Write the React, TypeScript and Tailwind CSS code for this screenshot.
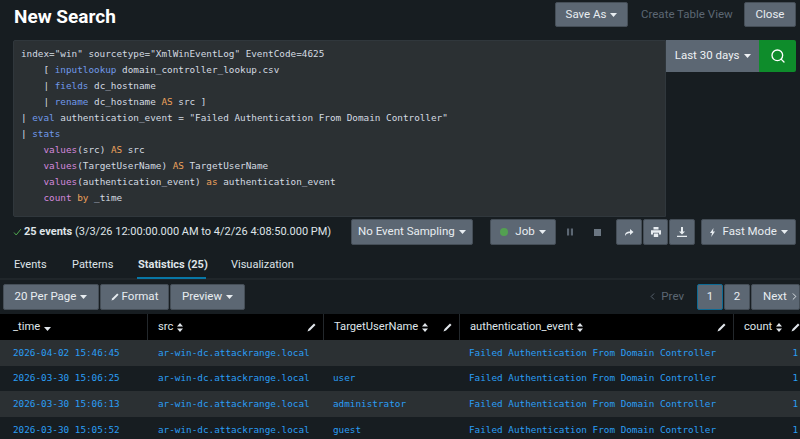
import { ChevronLeft, ChevronRight, Search } from 'lucide-react';

const rows = [
  { time: '2026-04-02 15:46:45', user: '', stripe: true },
  { time: '2026-03-30 15:06:25', user: 'user', stripe: false },
  { time: '2026-03-30 15:06:13', user: 'administrator', stripe: true },
  { time: '2026-03-30 15:05:52', user: 'guest', stripe: false },
];

function Caret() {
  return (
    <svg width="7" height="4" viewBox="0 0 7 4" className="ml-1 shrink-0">
      <path d="M0 0h7L3.5 4z" fill="currentColor" />
    </svg>
  );
}

function SortIcon() {
  return (
    <svg width="6" height="9" viewBox="0 0 6 9" className="ml-1 shrink-0 text-[#e1e6eb]">
      <path d="M3 0l3 3.4H0zM3 9L0 5.6h6z" fill="currentColor" />
    </svg>
  );
}

function Pencil() {
  return (
    <svg width="9" height="9" viewBox="0 0 9 9" className="shrink-0 text-[#e1e6eb]">
      <path d="M7 0.5l1.5 1.5L3 7.500 0.500 8.500 1.500 6z" fill="currentColor" />
    </svg>
  );
}

function Btn({ className, children }: { className: string; children: React.ReactNode }) {
  return (
    <div
      className={`flex items-center justify-center rounded-[2px] border border-[#454e57] bg-[#5c6773] text-[11.500px] text-[#e8edf1] ${className}`}
    >
      {children}
    </div>
  );
}

function Code({ c, children }: { c: string; children: React.ReactNode }) {
  return <span className={c}>{children}</span>;
}

function Th({ className, label, sort, pencil, down }: { className: string; label: string; sort?: boolean; pencil?: boolean; down?: boolean }) {
  return (
    <div className={`flex h-full shrink-0 items-center border-r border-[#23282c] pl-[10px] pr-[7px] ${className}`}>
      <span className="text-[11.200px] text-[#dfe4e8]">{label}</span>
      {sort && <SortIcon />}
      {down && (
        <span className="mt-[3px] text-[#e1e6eb]">
          <Caret />
        </span>
      )}
      {pencil && (
        <span className="ml-auto">
          <Pencil />
        </span>
      )}
    </div>
  );
}

export default function App() {
  const kw = 'text-[#7099ea]';
  const orange = 'text-[#eda25c]';
  const pink = 'text-[#d488dc]';

  return (
    <div className="flex h-[439px] w-[800px] flex-col overflow-hidden bg-[#171d21] font-['Roboto',sans-serif]">
      {/* title bar */}
      <div className="flex h-[40px] shrink-0 items-start justify-between pl-[14px] pr-[4px]">
        <h1 className="mt-[3px] text-[19px] leading-[28px] font-bold text-white">New Search</h1>
        <div className="mt-[2px] flex items-center">
          <Btn className="h-[25px] w-[73px]">
            Save As
            <Caret />
          </Btn>
          <span className="mx-[13px] w-[90px] text-[11.500px] whitespace-nowrap text-[#5c6773]">Create Table View</span>
          <Btn className="h-[25px] w-[52px]">Close</Btn>
        </div>
      </div>

      {/* search */}
      <div className="flex h-[177px] shrink-0 items-start pl-[13px] pr-[4px]">
        <div className="h-full w-[654px] rounded-l-[2px] border border-[#30373c] bg-[#2b3033] pl-[7px] pt-[4.500px] font-['DejaVu_Sans_Mono',monospace] text-[9.33px] leading-[16px] whitespace-pre text-[#d3dae1]">
          <div>index="win" sourcetype="XmlWinEventLog" EventCode=4625</div>
          <div>{'    [ '}<Code c={kw}>inputlookup</Code> domain_controller_lookup.csv</div>
          <div>{'    | '}<Code c={kw}>fields</Code> dc_hostname</div>
          <div>{'    | '}<Code c={kw}>rename</Code> dc_hostname <Code c={orange}>AS</Code> src ]</div>
          <div>| <Code c={kw}>eval</Code> authentication_event = "Failed Authentication From Domain Controller"</div>
          <div>| <Code c={kw}>stats</Code></div>
          <div>{'    '}<Code c={pink}>values</Code>(src) <Code c={orange}>AS</Code> src</div>
          <div>{'    '}<Code c={pink}>values</Code>(TargetUserName) <Code c={orange}>AS</Code> TargetUserName</div>
          <div>{'    '}<Code c={pink}>values</Code>(authentication_event) <Code c={orange}>as</Code> authentication_event</div>
          <div>{'    '}<Code c={pink}>count</Code> <Code c={orange}>by</Code> _time</div>
        </div>
        <div className="flex h-[32px] w-[93px] items-center justify-center bg-[#5c6773] text-[11.500px] text-[#eef1f4]">
          Last 30 days
          <Caret />
        </div>
        <div className="flex h-[32px] w-[37px] items-center justify-center rounded-r-[2px] bg-[#0e8c2b] text-white">
          <Search size={16} strokeWidth={2} />
        </div>
      </div>

      {/* job status */}
      <div className="mt-[2px] flex h-[26px] shrink-0 items-center pl-[13px] pr-[4px]">
        <svg width="9" height="8" viewBox="0 0 9 8" className="mr-[2px] shrink-0">
          <path d="M1 4.500L3.200 7 8 1" fill="none" stroke="#4fa84f" strokeWidth="1" />
        </svg>
        <span className="w-[328px] text-[11px] whitespace-nowrap text-[#dfe4e8]">
          <b>25 events</b> (3/3/26 12:00:00.000 AM to 4/2/26 4:08:50.000 PM)
        </span>
        <Btn className="h-[26px] w-[123px] whitespace-nowrap">
          No Event Sampling
          <Caret />
        </Btn>
        <Btn className="ml-[17px] h-[26px] w-[66px]">
          <span className="mr-[7px] h-[8px] w-[8px] rounded-full bg-[#53a051]" />
          Job
          <Caret />
        </Btn>
        <div className="flex w-[60px] items-center gap-[21px] pl-[11px]">
          <svg width="6" height="8" viewBox="0 0 7 8"><path d="M0 0h2.500v8H0zM4.500 0H7v8H4.500z" fill="#5c6773" /></svg>
          <div className="h-[7px] w-[7px] bg-[#6b7682]" />
        </div>
        <Btn className="h-[26px] w-[26px]">
          <svg width="10" height="8" viewBox="0 0 10 8"><path d="M1 8C1 4.500 3 3.500 6 3.500V1l3.500 3L6 7V5C4 5 2.300 5.800 1 8z" fill="currentColor" /></svg>
        </Btn>
        <Btn className="ml-[1px] h-[26px] w-[26px]">
          <svg width="10" height="10" viewBox="0 0 10 10"><path d="M2.500 0h5v2.500h-5zM0 3.200h10v4.300H8V5.800H2v1.700H0zM2.800 6.500h4.400V10H2.800z" fill="currentColor" /></svg>
        </Btn>
        <Btn className="ml-[1px] h-[26px] w-[26px]">
          <svg width="10" height="10" viewBox="0 0 10 10"><path d="M4 0h2v4.500h2L5 7.500 2 4.500h2zM0 8.800h10V10H0z" fill="currentColor" /></svg>
        </Btn>
        <Btn className="ml-[6px] h-[26px] w-[95px] whitespace-nowrap">
          <svg width="5" height="9" viewBox="0 0 5 9" className="mr-[8px]"><path d="M3.500 0L0 5h2L1.200 9 5 3.500H3z" fill="currentColor" /></svg>
          Fast Mode
          <Caret />
        </Btn>
      </div>

      {/* tabs */}
      <div className="mt-[4px] flex h-[31px] shrink-0 items-stretch border-b-2 border-[#20262a] pl-[14px] pt-[3px] text-[11px] text-[#dfe4e8]">
        <div className="flex w-[58px] items-center">Events</div>
        <div className="flex w-[66px] items-center">Patterns</div>
        <div className="relative flex w-[93px] items-center font-bold">
          <span className="whitespace-nowrap">Statistics (25)</span>
          <span className="absolute bottom-[-1px] left-[-1px] h-[2px] w-[69px] bg-[#0877a6]" />
        </div>
        <div className="flex items-center">Visualization</div>
      </div>

      {/* results toolbar */}
      <div className="mt-[3px] flex h-[27px] shrink-0 items-center pl-[3px]">
        <Btn className="h-[26px] w-[96px]">
          20 Per Page
          <Caret />
        </Btn>
        <Btn className="ml-[1px] h-[26px] w-[69px]">
          <svg width="8" height="8" viewBox="0 0 9 9" className="mr-[3px]"><path d="M7 0.500l1.500 1.500L3 7.500 0.500 8.500 1.500 6z" fill="currentColor" /></svg>
          Format
        </Btn>
        <Btn className="ml-[1px] h-[26px] w-[75px]">
          Preview
          <Caret />
        </Btn>
        <div className="ml-auto flex items-center">
          <span className="mr-[13px] flex items-center text-[11.500px] text-[#5c6773]">
            <ChevronLeft size={11} className="mr-[3px]" />
            Prev
          </span>
          <Btn className="h-[26px] w-[26px] !border-[#0d6a94]">1</Btn>
          <Btn className="ml-[1px] h-[26px] w-[26px]">2</Btn>
          <Btn className="ml-[1px] h-[26px] w-[49px] justify-start whitespace-nowrap pl-[11px]">
            Next
            <ChevronRight size={11} className="ml-[2px] shrink-0" />
          </Btn>
        </div>
      </div>

      {/* table */}
      <div className="mt-[4px] flex h-[26px] shrink-0 items-center bg-black">
        <Th className="w-[148px] pl-[13px]" label="_time" down />
        <Th className="w-[176px]" label="src" sort pencil />
        <Th className="w-[136px] pl-[9px]" label="TargetUserName" sort pencil />
        <Th className="w-[274px]" label="authentication_event" sort pencil />
        <Th className="w-[80px] !border-r-0 pr-[14px]" label="count" sort pencil />
      </div>
      {rows.map((r) => (
        <div
          key={r.time}
          className={`flex h-[25.600px] shrink-0 items-center font-['DejaVu_Sans_Mono',monospace] text-[9.33px] whitespace-pre text-[#2a9df4] ${
            r.stripe ? 'bg-[#2b3033]' : 'bg-[#171d21]'
          }`}
        >
          <div className="w-[148px] shrink-0 pl-[13px]">{r.time}</div>
          <div className="w-[176px] shrink-0 pl-[10px]">ar-win-dc.attackrange.local</div>
          <div className="w-[136px] shrink-0 pl-[9px]">{r.user}</div>
          <div className="w-[274px] shrink-0 pl-[9px]">Failed Authentication From Domain Controller</div>
          <div className="w-[66px] shrink-0 pr-[2px] text-right">1</div>
        </div>
      ))}
    </div>
  );
}
